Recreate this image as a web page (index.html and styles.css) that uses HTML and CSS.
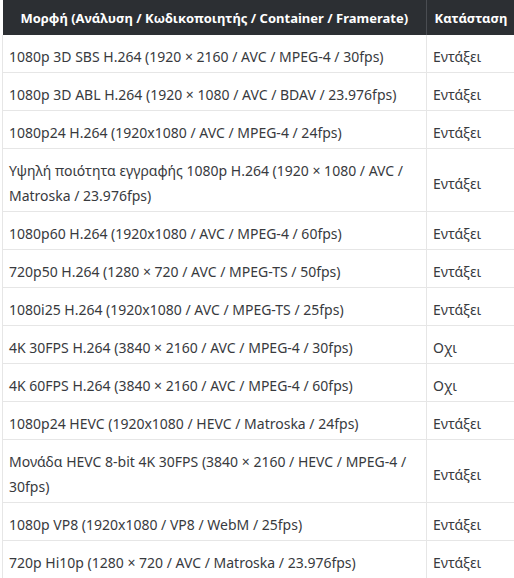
FILE: index.html
```html
<!DOCTYPE html>
<html lang="el">
<head>
<meta charset="utf-8">
<link rel="stylesheet" href="styles.css">
</head>
<body>
<table class="formats">
  <thead>
    <tr><th class="col-format">Μορφή (Ανάλυση / Κωδικοποιητής / Container / Framerate)</th><th class="col-status">Κατάσταση</th></tr>
  </thead>
  <tbody>
    <tr><td>1080p 3D SBS H.264 (1920 × 2160 / AVC / MPEG-4 / 30fps)</td><td>Εντάξει</td></tr>
    <tr><td>1080p 3D ABL H.264 (1920 × 1080 / AVC / BDAV / 23.976fps)</td><td>Εντάξει</td></tr>
    <tr><td>1080p24 H.264 (1920x1080 / AVC / MPEG-4 / 24fps)</td><td>Εντάξει</td></tr>
    <tr><td>Υψηλή ποιότητα εγγραφής 1080p H.264 (1920 × 1080 / AVC / Matroska / 23.976fps)</td><td>Εντάξει</td></tr>
    <tr><td>1080p60 H.264 (1920x1080 / AVC / MPEG-4 / 60fps)</td><td>Εντάξει</td></tr>
    <tr><td>720p50 H.264 (1280 × 720 / AVC / MPEG-TS / 50fps)</td><td>Εντάξει</td></tr>
    <tr><td>1080i25 H.264 (1920x1080 / AVC / MPEG-TS / 25fps)</td><td>Εντάξει</td></tr>
    <tr><td>4K 30FPS H.264 (3840 × 2160 / AVC / MPEG-4 / 30fps)</td><td>Οχι</td></tr>
    <tr><td>4K 60FPS H.264 (3840 × 2160 / AVC / MPEG-4 / 60fps)</td><td>Οχι</td></tr>
    <tr><td>1080p24 HEVC (1920x1080 / HEVC / Matroska / 24fps)</td><td>Εντάξει</td></tr>
    <tr><td>Μονάδα HEVC 8-bit 4K 30FPS (3840 × 2160 / HEVC / MPEG-4 / 30fps)</td><td>Εντάξει</td></tr>
    <tr><td>1080p VP8 (1920x1080 / VP8 / WebM / 25fps)</td><td>Εντάξει</td></tr>
    <tr><td>720p Hi10p (1280 × 720 / AVC / Matroska / 23.976fps)</td><td>Εντάξει</td></tr>
  </tbody>
</table>
</body>
</html>
```

FILE: styles.css
```css
html, body {
  margin: 0;
  padding: 0;
  background: #ffffff;
}
body {
  padding-left: 2px;
  font-family: "Noto Sans", "Open Sans", sans-serif;
  font-size: 14px;
  color: #383a3e;
}
.formats {
  border-collapse: collapse;
  width: 514px;
  table-layout: fixed;
}
.formats th {
  background: #2c2f33;
  color: #ffffff;
  font-size: 13px;
  font-weight: 700;
  height: 35px;
  padding: 1px 6px 0;
  box-sizing: border-box;
  text-align: center;
  white-space: nowrap;
  border-right: 1px solid #4a4d52;
}
.col-format { width: 424px; }
.formats td {
  padding: 9px 6px 3px;
  line-height: 25px;
  border: 1px solid #e6e6e6;
  text-align: left;
  vertical-align: middle;
}
.formats tbody tr:first-child td { border-top: none; }
```
